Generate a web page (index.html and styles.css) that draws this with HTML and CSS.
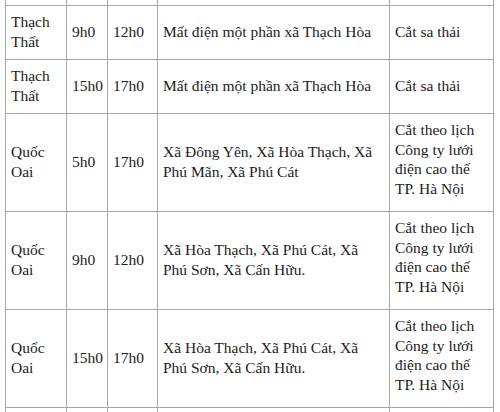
FILE: index.html
```html
<!DOCTYPE html>
<html lang="vi">
<head>
<meta charset="utf-8">
<title>Lịch cắt điện</title>
<link rel="stylesheet" href="styles.css">
</head>
<body>
<table class="schedule">
  <colgroup>
    <col class="c-area">
    <col class="c-from">
    <col class="c-to">
    <col class="c-place">
    <col class="c-reason">
  </colgroup>
  <tbody>
    <tr class="stub-top"><td></td><td></td><td></td><td></td><td></td></tr>
    <tr>
      <td>Thạch Thất</td>
      <td>9h0</td>
      <td>12h0</td>
      <td>Mất điện một phần xã Thạch Hòa</td>
      <td>Cắt sa thải</td>
    </tr>
    <tr>
      <td>Thạch Thất</td>
      <td>15h0</td>
      <td>17h0</td>
      <td>Mất điện một phần xã Thạch Hòa</td>
      <td>Cắt sa thải</td>
    </tr>
    <tr class="tall">
      <td>Quốc Oai</td>
      <td>5h0</td>
      <td>17h0</td>
      <td>Xã Đông Yên, Xã Hòa Thạch, Xã Phú Mãn, Xã Phú Cát</td>
      <td>Cắt theo lịch Công ty lưới điện cao thế TP. Hà Nội</td>
    </tr>
    <tr class="tall">
      <td>Quốc Oai</td>
      <td>9h0</td>
      <td>12h0</td>
      <td>Xã Hòa Thạch, Xã Phú Cát, Xã Phú Sơn, Xã Cấn Hữu.</td>
      <td>Cắt theo lịch Công ty lưới điện cao thế TP. Hà Nội</td>
    </tr>
    <tr class="tall">
      <td>Quốc Oai</td>
      <td>15h0</td>
      <td>17h0</td>
      <td>Xã Hòa Thạch, Xã Phú Cát, Xã Phú Sơn, Xã Cấn Hữu.</td>
      <td>Cắt theo lịch Công ty lưới điện cao thế TP. Hà Nội</td>
    </tr>
    <tr class="stub-bottom"><td></td><td></td><td></td><td></td><td></td></tr>
  </tbody>
</table>
</body>
</html>
```
FILE: styles.css
```css
html, body {
  margin: 0;
  padding: 0;
  background: #ffffff;
  height: 412px;
  overflow: hidden;
  font-family: "Liberation Serif", serif;
}

.schedule {
  margin-left: 5px;
  border-collapse: collapse;
  table-layout: fixed;
  width: 488px;
  color: #1c1c1c;
}

.c-area { width: 61px; }
.c-from { width: 41px; }
.c-to { width: 50px; }
.c-place { width: 232px; }
.c-reason { width: 104px; }

.schedule td {
  font-family: "Liberation Serif", serif;
  font-size: 15.5px;
  line-height: 19.5px;
  border: 1px solid #a6a6a6;
  padding: 6px 4px 8px 5px;
  vertical-align: middle;
  text-align: left;
}

.schedule .tall td:last-child {
  padding-bottom: 13px;
}

.schedule .stub-top td {
  border-top: 0;
  padding: 0;
  height: 5px;
}

.schedule .stub-bottom td {
  border-bottom: 0;
  padding: 0;
  height: 4px;
}
```
